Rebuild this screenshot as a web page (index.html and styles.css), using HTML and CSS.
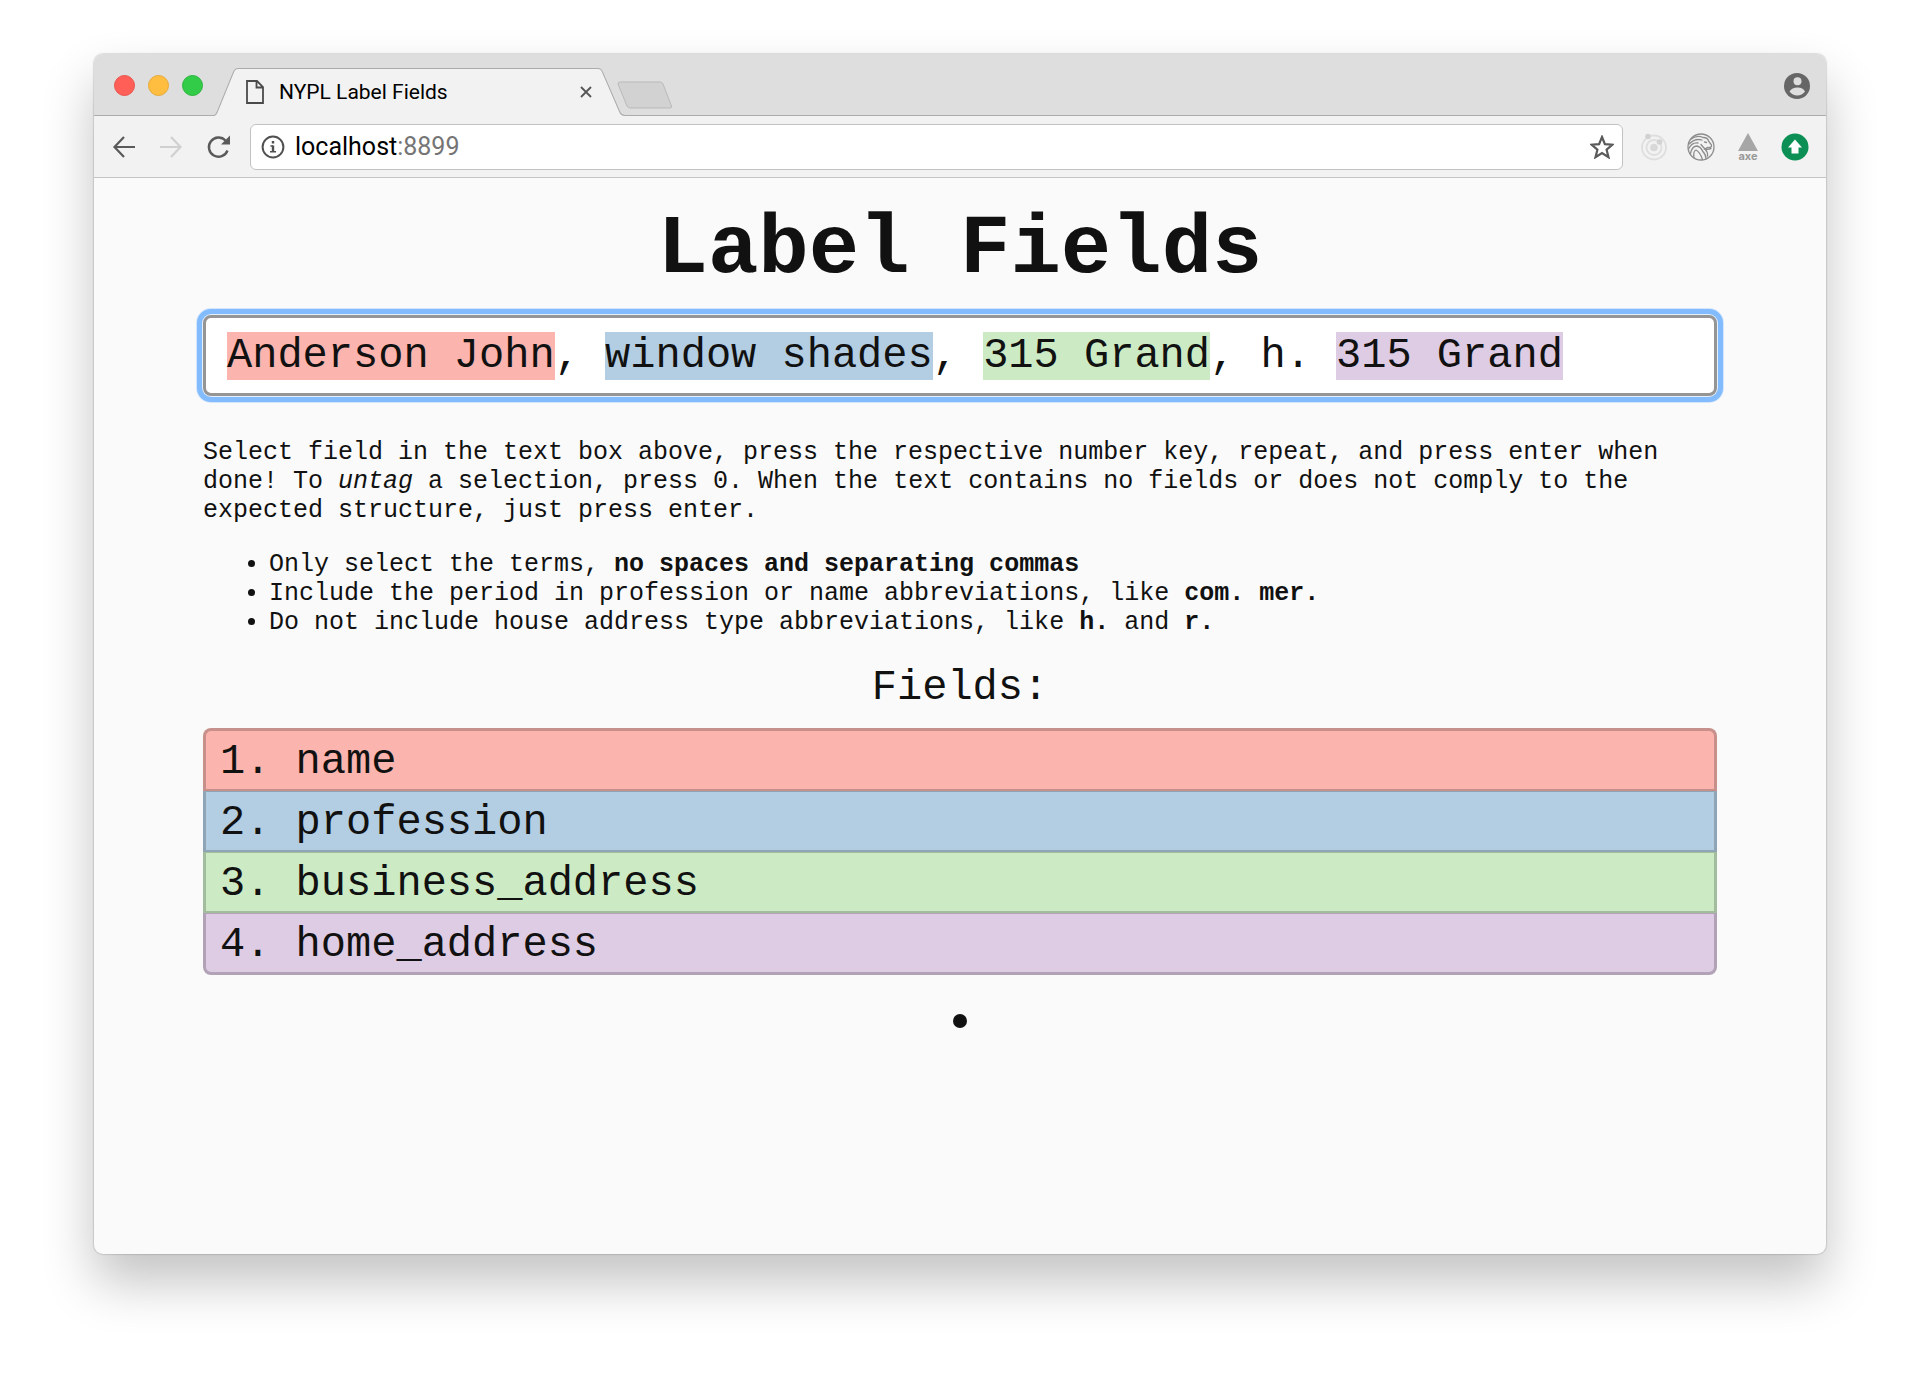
FILE: index.html
```html
<!DOCTYPE html>
<html lang="en">
<head>
<meta charset="utf-8">
<meta name="viewport" content="width=device-width, initial-scale=1">
<title>NYPL Label Fields</title>
<link rel="stylesheet" href="styles.css">
</head>
<body>
<div class="window">
  <header class="tabstrip">
    <div class="lights">
      <button class="light light-close" aria-label="Close window"></button>
      <button class="light light-minimize" aria-label="Minimize window"></button>
      <button class="light light-zoom" aria-label="Zoom window"></button>
    </div>
    <div class="tab">
      <svg class="tab-shape" viewBox="0 0 410 48" preserveAspectRatio="none" aria-hidden="true">
        <path d="M0 48 L0 47.500 Q2 47 3 44.500 L19.500 4 Q21 .5 24 .5 L383 .5 Q386 .5 387.500 4 L405 44.500 Q406 47 410 47.500 V48 Z" fill="#f2f2f2"/>
        <path d="M0 47.500 Q2 47 3 44.500 L19.500 4 Q21 .5 24 .5 L383 .5 Q386 .5 387.500 4 L405 44.500 Q406 47 410 47.500" fill="none" stroke="#acacac"/>
      </svg>
      <svg class="tab-icon" viewBox="0 0 18 24" aria-hidden="true"><path d="M1 1H11L17 7V23H1Z M10.500 1V7.500H17" fill="none" stroke="#4a4a4a" stroke-width="1.800"/></svg>
      <span class="tab-title">NYPL Label Fields</span>
      <button class="tab-close" aria-label="Close tab"><svg viewBox="0 0 12 12" width="12" height="12"><path d="M1 1L11 11M11 1L1 11" stroke="#555" stroke-width="1.800"/></svg></button>
    </div>
    <button class="new-tab" aria-label="New tab"><svg viewBox="0 0 56 28" width="56" height="28"><path d="M3 1H43Q45 1 46 3L54.500 25Q55 27 53 27H13Q11 27 10 25L1 3Q1 1 3 1Z" fill="#d2d2d2" stroke="#b9b9b9"/></svg></button>
    <button class="profile" aria-label="Profile"><svg viewBox="0 0 26 26" width="26" height="26"><circle cx="13" cy="13" r="13" fill="#666"/><circle cx="13.500" cy="8.200" r="4" fill="#dedede"/><path d="M5.500 18.500Q8 14.500 13.500 14.500T21 18.500Q18 22.500 13.300 22.500T5.500 18.500Z" fill="#dedede"/></svg></button>
  </header>
  <nav class="toolbar">
    <div class="nav-buttons">
      <button aria-label="Back"><svg viewBox="0 0 24 24" width="24" height="24"><path d="M23 12H2.500M12 2L2.500 12L12 22" fill="none" stroke="#5a5a5a" stroke-width="2.200"/></svg></button>
      <button aria-label="Forward"><svg viewBox="0 0 24 24" width="24" height="24"><path d="M1 12H21.500M12 2L21.500 12L12 22" fill="none" stroke="#d0d0d0" stroke-width="2.200"/></svg></button>
      <button aria-label="Reload"><svg viewBox="0 0 24 24" width="24" height="24"><path d="M21.500 15.500A9.600 9.600 0 1 1 19.500 5.500" fill="none" stroke="#5a5a5a" stroke-width="2.400"/><path d="M24 .5V9.500H15Z" fill="#5a5a5a"/></svg></button>
    </div>
    <div class="omnibox">
      <svg viewBox="0 0 24 24" width="24" height="24" aria-hidden="true"><circle cx="12" cy="12" r="10.400" fill="none" stroke="#505050" stroke-width="2"/><path d="M12 10.500V16.500M12 6V8.500" stroke="#505050" stroke-width="2.400"/><path d="M9.500 11H12M9 16.800H15" stroke="#505050" stroke-width="1.400"/></svg>
      <span class="url">localhost<span class="port">:8899</span></span>
      <button aria-label="Bookmark"><svg viewBox="0 0 24 24" width="24" height="24"><path d="M12 2L14.900 9.200L22.500 9.700L16.600 14.700L18.500 22.200L12 18L5.500 22.200L7.400 14.700L1.500 9.700L9.100 9.200Z" fill="none" stroke="#5a5a5a" stroke-width="2.200"/></svg></button>
    </div>
    <div class="extensions">
      <button aria-label="Orbit"><svg viewBox="0 0 28 28" width="28" height="28"><g fill="none" stroke="#dedede" stroke-width="1.800"><circle cx="14" cy="14.500" r="12"/><circle cx="14" cy="14.500" r="7.500"/></g><circle cx="14" cy="14.500" r="3.800" fill="#d8d8d8"/><circle cx="8" cy="3.500" r="2.800" fill="#d2d2d2"/><circle cx="19.500" cy="9" r="2.800" fill="#d2d2d2"/></svg></button>
      <button aria-label="NYPL"><svg viewBox="0 0 28 28" width="28" height="28"><g fill="none" stroke="#8d8d8d" stroke-width="1.300" stroke-linecap="round"><circle cx="14" cy="14" r="13"/><path d="M3.500 6.500Q10 1.500 16 4.500Q21 4.500 21.500 8L24.500 12Q25 15 20.500 14.500L18 16Q22 17 24 15.500"/><path d="M2 11Q8 5 15 7M1.500 16Q5 9 11 10M3.500 20.500Q5 13 10 13Q14 14 15.500 18Q19 22 19 25.500M7 24.500Q6 18 9 17Q13 19 15.500 26.500M17.500 9L19.500 9.500M14 11.500Q16 14 18 16Q21 19 20.500 23"/></g></svg></button>
      <button class="axe" aria-label="axe"><svg viewBox="0 0 22 18" width="22" height="18"><path d="M11 0L21 18H1Z" fill="#a6a6a6"/></svg><span>axe</span></button>
      <button aria-label="Upload"><svg viewBox="0 0 28 28" width="28" height="28"><circle cx="14" cy="14" r="13.500" fill="#0b8f55"/><path d="M14 6.500L21 14.500H17.500V20.500H10.500V14.500H7Z" fill="#fff"/></svg></button>
    </div>
  </nav>
  <main class="page">
    <h1>Label Fields</h1>
    <div class="entry" role="textbox" aria-label="Text to label" contenteditable="true" spellcheck="false"><mark class="name">Anderson John</mark>, <mark class="profession">window shades</mark>, <mark class="business">315 Grand</mark>, h. <mark class="home">315 Grand</mark></div>
    <p>Select field in the text box above, press the respective number key, repeat, and press enter when done! To <em>untag</em> a selection, press 0. When the text contains no fields or does not comply to the expected structure, just press enter.</p>
    <ul class="hints">
      <li>Only select the terms, <strong>no spaces and separating commas</strong></li>
      <li>Include the period in profession or name abbreviations, like <strong>com. mer.</strong></li>
      <li>Do not include house address type abbreviations, like <strong>h.</strong> and <strong>r.</strong></li>
    </ul>
    <h2>Fields:</h2>
    <ol class="fields">
      <li class="name">1. name</li>
      <li class="profession">2. profession</li>
      <li class="business">3. business_address</li>
      <li class="home">4. home_address</li>
    </ol>
    <div class="status"><span class="dot"></span></div>
  </main>
</div>
</body>
</html>
```
FILE: styles.css
```css
* { box-sizing: border-box; }
body { margin: 0; background: #fff; color: #111; }
button { display: block; padding: 0; border: 0; background: none; }
svg { display: block; }

.window {
  display: flex;
  flex-direction: column;
  min-height: 1200px;
  margin: 54px 94px 134px;
  border-radius: 9px;
  overflow: hidden;
  background: #fafafa;
  box-shadow: 0 0 1px 1px rgba(0, 0, 0, .12), 0 28px 52px rgba(0, 0, 0, .24);
}

.tabstrip {
  display: flex;
  align-items: flex-end;
  height: 62px;
  padding: 0 16px 0 20px;
  background: #dedede;
  box-shadow: inset 0 -1px #acacac;
  font-family: Roboto, sans-serif;
}
.lights { display: flex; gap: 13px; margin-bottom: 20px; }
.light { width: 21px; height: 21px; border: 1px solid; border-radius: 50%; }
.light-close { background: #ff5f57; border-color: #e8524b; }
.light-minimize { background: #ffbe3f; border-color: #e5a93a; }
.light-zoom { background: #32cc48; border-color: #2bb43d; }

.tab {
  position: relative;
  display: flex;
  align-items: center;
  width: 411px;
  height: 48px;
  margin-left: 11px;
  padding: 0 33px 0 32px;
}
.tab-shape { position: absolute; inset: 0; width: 100%; height: 100%; }
.tab-icon { position: relative; width: 18px; height: 24px; }
.tab-title { position: relative; flex: 1; margin-left: 15px; color: #000; font-size: 21px; line-height: 24px; }
.tab-close { position: relative; }
.new-tab { margin: 0 auto 7px -8px; }
.profile { margin-bottom: 17px; }

.toolbar {
  display: flex;
  align-items: center;
  height: 62px;
  padding: 0 17px 0 18px;
  border-bottom: 1px solid #c4c4c4;
  background: #f2f2f2;
}
.nav-buttons { display: flex; gap: 23px; margin-right: 20px; }
.omnibox {
  display: flex;
  flex: 1;
  align-items: center;
  height: 46px;
  padding: 0 8px 0 10px;
  border: 1px solid #c2c2c2;
  border-radius: 6px;
  background: #fff;
}
.url { flex: 1; margin-left: 10px; color: #000; font: 25px/30px Roboto, sans-serif; }
.port { color: #757575; }
.extensions { display: flex; align-items: center; gap: 19px; margin-left: 17px; }
.axe { display: flex; flex-direction: column; align-items: center; width: 28px; height: 28px; color: #999; font: bold 11px/10px Inter, sans-serif; }

.page {
  width: 1514px;
  max-width: calc(100% - 40px);
  margin: 0 auto;
  font: 25px/29px "Liberation Mono", "Courier New", monospace;
}
h1 { margin: 32px 0 25px; font-size: 84px; line-height: 80px; text-align: center; }
.entry {
  padding: 14px 21px 12px;
  border: 3px solid #959595;
  border-radius: 8px;
  outline: 5px solid #82bbfe;
  outline-offset: 1px;
  box-shadow: 0 0 0 1px #e4effc, 0 0 0 7px #d3e6fc;
  background: #fff;
  font-size: 42px;
  line-height: 49px;
}
mark { color: inherit; }
.name { background: #fbb4ae; }
.profession { background: #b3cde3; }
.business { background: #ccebc5; }
.home { background: #decbe4; }
.page p { margin: 42px 0 25px; }
.hints { margin: 0; padding-left: 66px; }
h2 { margin: 27px 0 16px; font-size: 42px; font-weight: 400; line-height: 48px; text-align: center; }
.fields { margin: 0; padding: 0; list-style: none; font-size: 42px; line-height: 54px; }
.fields li { padding: 4px 14px 0; border: solid rgba(0, 0, 0, .2); border-width: 1px 3px 2px; }
.fields li:first-child { border-top-width: 3px; border-radius: 8px 8px 0 0; }
.fields li:last-child { border-bottom-width: 3px; border-radius: 0 0 8px 8px; }
.status { display: flex; justify-content: center; padding: 39px 0; }
.dot { width: 14px; height: 14px; border-radius: 50%; background: #111; }
```
